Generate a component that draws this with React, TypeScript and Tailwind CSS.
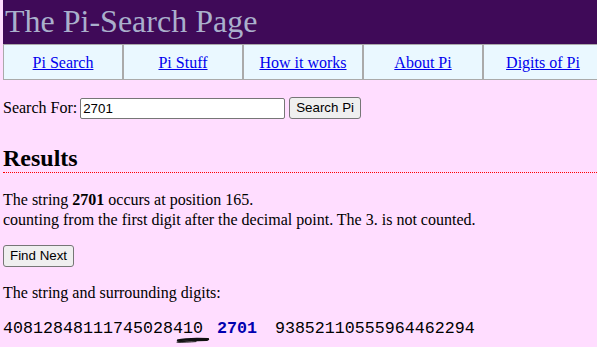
const navItems = ["Pi Search", "Pi Stuff", "How it works", "About Pi", "Digits of Pi"];

function Squiggle() {
  return (
    <svg
      className="absolute left-[171px] top-[16px]"
      width="38"
      height="9"
      viewBox="0 0 38 9"
      fill="none"
    >
      <path d="M4 5.5 C 12 3.5, 24 3.8, 34 4.2" stroke="#111" strokeWidth="2.4" strokeLinecap="round" />
      <path d="M5 6.8 C 14 5.6, 24 5.4, 33 5.2" stroke="#111" strokeWidth="1.6" strokeLinecap="round" />
      <path d="M3 7.2 C 10 7.4, 16 7.0, 22 6.6" stroke="#222" strokeWidth="1" strokeLinecap="round" />
    </svg>
  );
}

export default function App() {
  return (
    <div className="min-h-[347px] w-full overflow-hidden bg-[#ffddff] pl-[3px] font-['Liberation_Serif',serif] text-[16px] text-black">
      <div className="w-[620px]">
        {/* title bar */}
        <div className="h-[44px] bg-[#3f0a58] pl-[2px] text-[32px] leading-[43px] text-[#aab0cc]">
          The Pi-Search Page
        </div>

        {/* nav table */}
        <div className="flex">
          {navItems.map((item) => (
            <div
              key={item}
              className="flex h-[36px] w-[120px] shrink-0 items-center justify-center border border-[#aaaaaa] bg-[#eaf8ff] pt-[1px]"
            >
              <a href="#" className="text-[#0000ee] underline">
                {item}
              </a>
            </div>
          ))}
        </div>
      </div>

      {/* search form */}
      <div className="mt-[17px] flex h-[22px] items-center">
        <span>Search For:</span>
        <input
          type="text"
          defaultValue="2701"
          className="ml-[3px] h-[21px] w-[205px] rounded-[2px] border border-[#767676] bg-white px-[2px] font-['Liberation_Sans',sans-serif] text-[13.33px]"
        />
        <button className="ml-[4px] h-[22px] rounded-[3px] border border-[#767676] bg-[#efefef] px-[6px] font-['Liberation_Sans',sans-serif] text-[13.33px]">
          Search Pi
        </button>
      </div>

      <h2 className="mt-[25px] border-b border-dotted border-[#ff0000] text-[24px] font-bold leading-[28px]">
        Results
      </h2>

      <p className="mt-[17px] leading-[20px]">
        The string <b>2701</b> occurs at position 165.
        <br />
        counting from the first digit after the decimal point. The 3. is not counted.
      </p>

      <button className="mt-[15px] h-[22px] rounded-[3px] border border-[#767676] bg-[#efefef] px-[6px] font-['Liberation_Sans',sans-serif] text-[13.33px]">
        Find Next
      </button>

      <p className="mt-[16px] leading-[20px]">The string and surrounding digits:</p>

      <div className="relative mt-[16px] whitespace-pre font-['Liberation_Mono',monospace] text-[16.67px] leading-[20px]">
        <span>40812848111745028410 </span>
        <b className="ml-[4px] text-[#0000b0]">2701</b>
        <span className="ml-[8px]"> 93852110555964462294</span>
        <Squiggle />
      </div>
    </div>
  );
}
